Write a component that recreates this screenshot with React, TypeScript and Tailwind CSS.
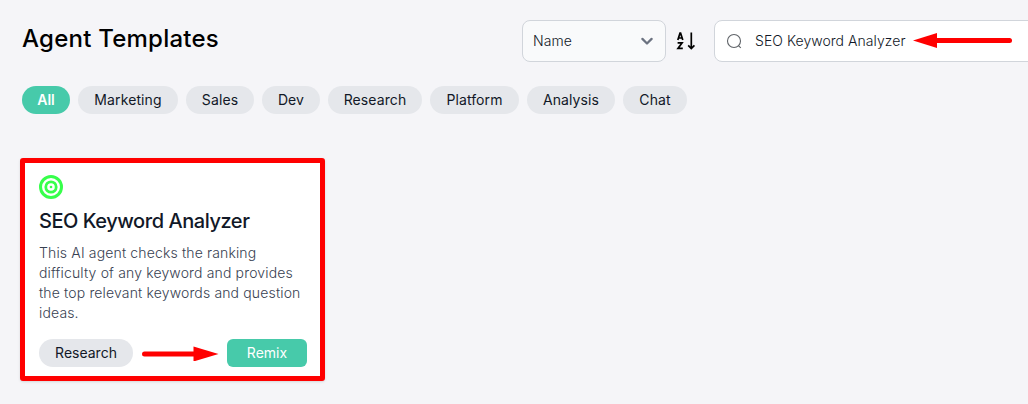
import React from "react";

const categories = [
  { label: "All", size: "w-[48px]", active: true },
  { label: "Marketing", size: "w-[100px]" },
  { label: "Sales", size: "w-[68px]" },
  { label: "Dev", size: "w-[58px]" },
  { label: "Research", size: "w-[94px]" },
  { label: "Platform", size: "w-[89px]" },
  { label: "Analysis", size: "w-[88px]" },
  { label: "Chat", size: "w-[64px]" },
];

function SortIcon() {
  return (
    <svg width="20" height="20" viewBox="0 0 20 20" fill="none" stroke="#000" strokeWidth="1.7">
      <path d="M1.8 8.9 4 2.2h.6l2.2 6.7M2.4 7h3.8" />
      <path d="M1.6 11.8h4.5L2 17.4h4.8" />
      <path d="M15.3 1.6v16M12.2 14.4l3.1 3.2 3.1-3.2" />
    </svg>
  );
}

function SearchIcon() {
  return (
    <svg className="shrink-0" width="16" height="16" viewBox="0 0 16 16" fill="none" stroke="#5f6368" strokeWidth="1.1">
      <circle cx="8" cy="8" r="6.5" />
      <path d="m12.4 12.6 2.4 2.2" />
    </svg>
  );
}

function TargetIcon() {
  return (
    <svg className="block" width="24" height="24" viewBox="0 0 24 24" fill="none" stroke="#37ff4b">
      <circle cx="12" cy="12" r="10.5" strokeWidth="3" />
      <circle cx="12" cy="12" r="5.2" strokeWidth="2.8" />
      <circle cx="12" cy="12" r="1.3" fill="#37ff4b" stroke="none" />
    </svg>
  );
}

export default function App() {
  return (
    <div className="h-[404px] w-full overflow-hidden bg-[#f5f5f8] pt-5 pl-[22px] font-['Inter',sans-serif] text-[#111827]">
      <header className="flex h-[42px] items-center">
        <h1 className="w-[500px] shrink-0 pb-[4px] text-2xl leading-8 font-medium tracking-[0.23px] text-black">Agent Templates</h1>
        <div className="flex h-[42px] w-[144px] shrink-0 items-center justify-between rounded-lg border border-[#d1d5db] bg-[#f9fafb] pr-[12px] pl-[10px] text-sm font-light">
          <span className="tracking-[0.1px]">Name</span>
          <svg width="12" height="8" viewBox="0 0 12 8" fill="none" stroke="#6b7280" strokeWidth="2.2" strokeLinecap="round" strokeLinejoin="round">
            <path d="m1.4 1.9 4.6 4.6 4.6-4.6" />
          </svg>
        </div>
        <div className="ml-[10px] w-[38px] shrink-0"><SortIcon /></div>
        <div className="flex h-[42px] w-[334px] shrink-0 items-center rounded-lg border border-[#d1d5db] bg-white pl-[11px] text-sm font-light">
          <SearchIcon />
          <span className="ml-[13px] w-[158px] shrink-0 tracking-[0.05px] whitespace-nowrap">SEO Keyword Analyzer</span>
          <svg className="shrink-0" width="102" height="16" viewBox="0 0 102 16" fill="red">
            <path d="M0 7.5 24 0v15z" />
            <path d="M20 7.5h76.5" stroke="red" strokeWidth="5" strokeLinecap="round" />
          </svg>
        </div>
      </header>
      <nav className="mt-6 flex gap-2">
        {categories.map((c) => (
          <button
            key={c.label}
            className={`h-7 shrink-0 rounded-full text-sm ${c.size} ${c.active ? "bg-[#47caaa] font-semibold text-white" : "bg-[#e5e7eb] tracking-[0.1px]"}`}
          >
            {c.label}
          </button>
        ))}
      </nav>
      <main className="mt-[44px] -ml-[2px]">
        <article className="h-[223px] w-[305px] rounded-[3px] border-[5px] border-[#ff0000] bg-white pt-[12px] pr-[13px] pl-[14px] shadow-sm">
          <TargetIcon />
          <h2 className="mt-[8px] text-xl leading-7 font-medium tracking-[-0.45px] whitespace-nowrap">SEO Keyword Analyzer</h2>
          <p className="mt-[8px] text-sm leading-5 font-light tracking-[0.15px] whitespace-nowrap text-[#374151]">
            This AI agent checks the ranking<br />difficulty of any keyword and provides<br />the top relevant keywords and question<br />ideas.
          </p>
          <div className="mt-4 flex items-center">
            <span className="flex h-7 w-[94px] items-center justify-center rounded-full bg-[#e5e7eb] text-sm">Research</span>
            <svg className="ml-[9px] shrink-0" width="77" height="16" viewBox="0 0 77 16" fill="red">
              <path d="M76.5 9 51.5 1.5v15z" />
              <path d="M2.5 9H55" stroke="red" strokeWidth="5" strokeLinecap="round" />
            </svg>
            <button className="ml-[8px] h-7 w-20 shrink-0 rounded-md bg-[#47caaa] text-sm text-white">Remix</button>
          </div>
        </article>
      </main>
    </div>
  );
}
